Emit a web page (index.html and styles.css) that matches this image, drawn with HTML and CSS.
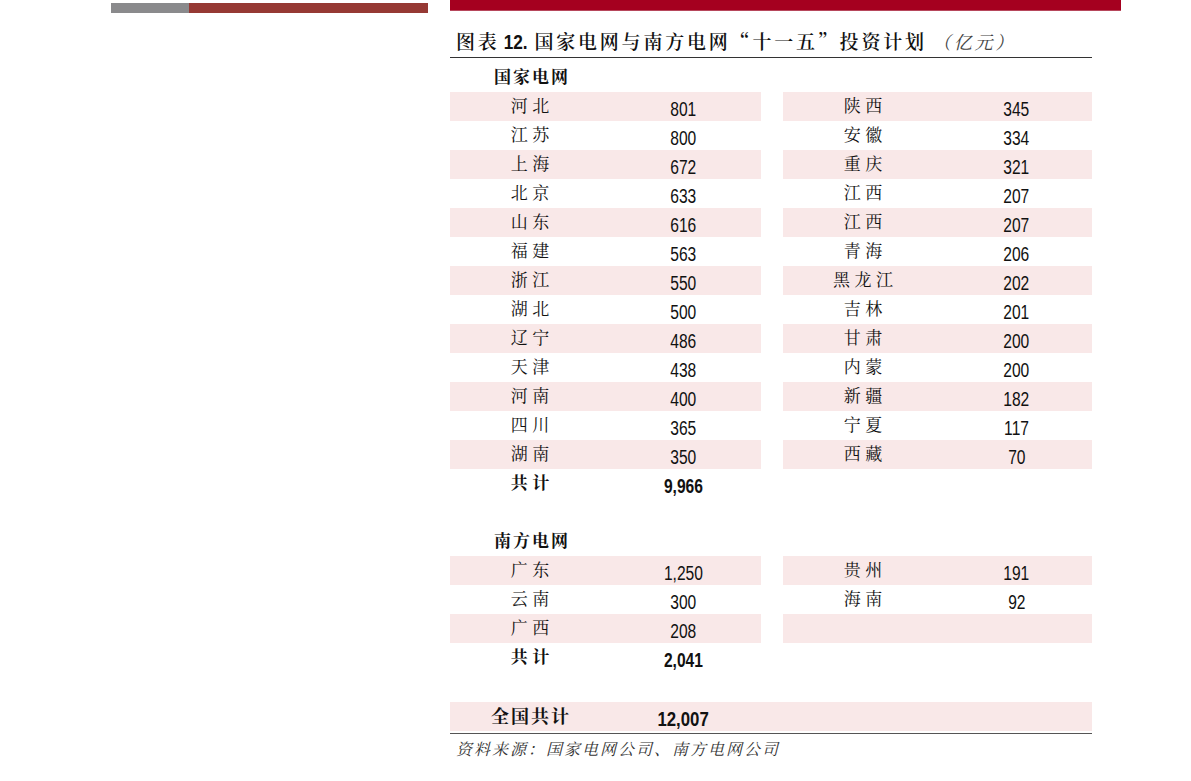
FILE: index.html
```html
<!DOCTYPE html>
<html lang="zh-CN">
<head>
<meta charset="utf-8">
<title>图表 12</title>
<link rel="stylesheet" href="styles.css">
</head>
<body>
<div class="page">
  <div class="side">
    <div class="side-bar"><span class="gray"></span><span class="brown"></span></div>
  </div>
  <div class="main">
    <div class="top-bar"></div>
    <h1 class="title">图表<span class="fig-no">12.</span> 国家电网与南方电网“十一五”投资计划<span class="unit">（亿元）</span></h1>
    <div class="table">
      <div class="row"><div class="section-head">国家电网</div></div>
      <div class="row pink"><div class="half"><span class="name">河北</span><span class="num">801</span></div><div class="half"><span class="name">陕西</span><span class="num">345</span></div></div>
      <div class="row"><div class="half"><span class="name">江苏</span><span class="num">800</span></div><div class="half"><span class="name">安徽</span><span class="num">334</span></div></div>
      <div class="row pink"><div class="half"><span class="name">上海</span><span class="num">672</span></div><div class="half"><span class="name">重庆</span><span class="num">321</span></div></div>
      <div class="row"><div class="half"><span class="name">北京</span><span class="num">633</span></div><div class="half"><span class="name">江西</span><span class="num">207</span></div></div>
      <div class="row pink"><div class="half"><span class="name">山东</span><span class="num">616</span></div><div class="half"><span class="name">江西</span><span class="num">207</span></div></div>
      <div class="row"><div class="half"><span class="name">福建</span><span class="num">563</span></div><div class="half"><span class="name">青海</span><span class="num">206</span></div></div>
      <div class="row pink"><div class="half"><span class="name">浙江</span><span class="num">550</span></div><div class="half"><span class="name">黑龙江</span><span class="num">202</span></div></div>
      <div class="row"><div class="half"><span class="name">湖北</span><span class="num">500</span></div><div class="half"><span class="name">吉林</span><span class="num">201</span></div></div>
      <div class="row pink"><div class="half"><span class="name">辽宁</span><span class="num">486</span></div><div class="half"><span class="name">甘肃</span><span class="num">200</span></div></div>
      <div class="row"><div class="half"><span class="name">天津</span><span class="num">438</span></div><div class="half"><span class="name">内蒙</span><span class="num">200</span></div></div>
      <div class="row pink"><div class="half"><span class="name">河南</span><span class="num">400</span></div><div class="half"><span class="name">新疆</span><span class="num">182</span></div></div>
      <div class="row"><div class="half"><span class="name">四川</span><span class="num">365</span></div><div class="half"><span class="name">宁夏</span><span class="num">117</span></div></div>
      <div class="row pink"><div class="half"><span class="name">湖南</span><span class="num">350</span></div><div class="half"><span class="name">西藏</span><span class="num">70</span></div></div>
      <div class="row total"><div class="half"><span class="name">共计</span><span class="num">9,966</span></div></div>
      <div class="row"></div>
      <div class="row"><div class="section-head">南方电网</div></div>
      <div class="row pink"><div class="half"><span class="name">广东</span><span class="num">1,250</span></div><div class="half"><span class="name">贵州</span><span class="num">191</span></div></div>
      <div class="row"><div class="half"><span class="name">云南</span><span class="num">300</span></div><div class="half"><span class="name">海南</span><span class="num">92</span></div></div>
      <div class="row pink"><div class="half"><span class="name">广西</span><span class="num">208</span></div><div class="half"></div></div>
      <div class="row total"><div class="half"><span class="name">共计</span><span class="num">2,041</span></div></div>
      <div class="row"></div>
      <div class="row grand"><div class="half"><span class="name">全国共计</span><span class="num">12,007</span></div></div>
    </div>
    <p class="source">资料来源：国家电网公司、南方电网公司</p>
  </div>
</div>
</body>
</html>
```

FILE: styles.css
```css
html, body {
  margin: 0;
  padding: 0;
  background: #ffffff;
}

body {
  font-family: "Noto Serif CJK SC", "Noto Sans CJK SC", "Liberation Serif", serif;
  color: #111;
}

.page {
  display: flex;
  gap: 22px;
  padding-left: 111px;
}

.side {
  width: 317px;
  padding-top: 3px;
}

.side-bar {
  display: flex;
  height: 10px;
}

.side-bar .gray {
  width: 78px;
  background: #8a8a8c;
}

.side-bar .brown {
  flex: 1;
  background: #963934;
}

.main {
  width: 671px;
}

.top-bar {
  height: 10px;
  background: #a5001f;
  border-bottom: 1px solid #b7485c;
}

.title {
  margin: 17px 0 0 0;
  width: 636px;
  height: 25px;
  box-sizing: content-box;
  padding: 0 0 4px 6px;
  font-size: 19px;
  line-height: 25px;
  font-weight: 600;
  letter-spacing: 2.8px;
  color: #111;
  border-bottom: 1px solid #333;
  white-space: nowrap;
  overflow: visible;
}

.fig-no {
  display: inline-block;
  font-family: "Liberation Sans", sans-serif;
  font-weight: 700;
  font-size: 21px;
  letter-spacing: 0;
  line-height: 20px;
  transform: scaleX(0.82);
  margin: 0 -3px 0 1px;
}

.unit {
  font-style: italic;
  font-weight: 400;
  color: #444;
  font-size: 18px;
  margin-left: 6px;
}

.table {
  width: 642px;
  margin-top: 5px;
}

.row {
  display: grid;
  grid-template-columns: 311px 309px;
  column-gap: 22px;
  height: 29px;
}

.half {
  display: grid;
  grid-template-columns: 160px 147px;
  align-items: center;
  height: 29px;
}

.row.pink .half {
  background: #f9e8e8;
}

.name {
  text-align: center;
  font-size: 17px;
  letter-spacing: 4.5px;
  padding-left: 4.5px;
  line-height: 26px;
  height: 26px;
  margin-bottom: 3px;
  overflow: visible;
}

.num {
  justify-self: center;
  display: inline-block;
  font-family: "Liberation Sans", sans-serif;
  font-size: 19.5px;
  line-height: 22px;
  height: 22px;
  margin-top: 4px;
  transform: scaleX(0.8);
}

.section-head {
  grid-column: 1;
  width: 160px;
  text-align: center;
  font-size: 17px;
  font-weight: 700;
  letter-spacing: 2px;
  padding-left: 2px;
  line-height: 26px;
  height: 29px;
}

.total .name {
  font-weight: 700;
}

.total .num,
.grand .num {
  font-weight: 700;
}

.grand {
  display: block;
  background: #f9e8e8;
  height: 29px;
  margin-top: 1px;
  box-shadow: 0 2px 0 0 #fff, 0 3px 0 0 #555;
}

.grand .half {
  width: 311px;
}

.grand .name {
  font-weight: 700;
  font-size: 18px;
  letter-spacing: 2px;
  padding-left: 2px;
}

.grand .num {
  font-size: 21px;
}

.source {
  margin: 8px 0 0 0;
  padding-left: 6px;
  font-size: 16px;
  line-height: 20px;
  font-style: italic;
  letter-spacing: 2px;
  color: #333;
}
```
